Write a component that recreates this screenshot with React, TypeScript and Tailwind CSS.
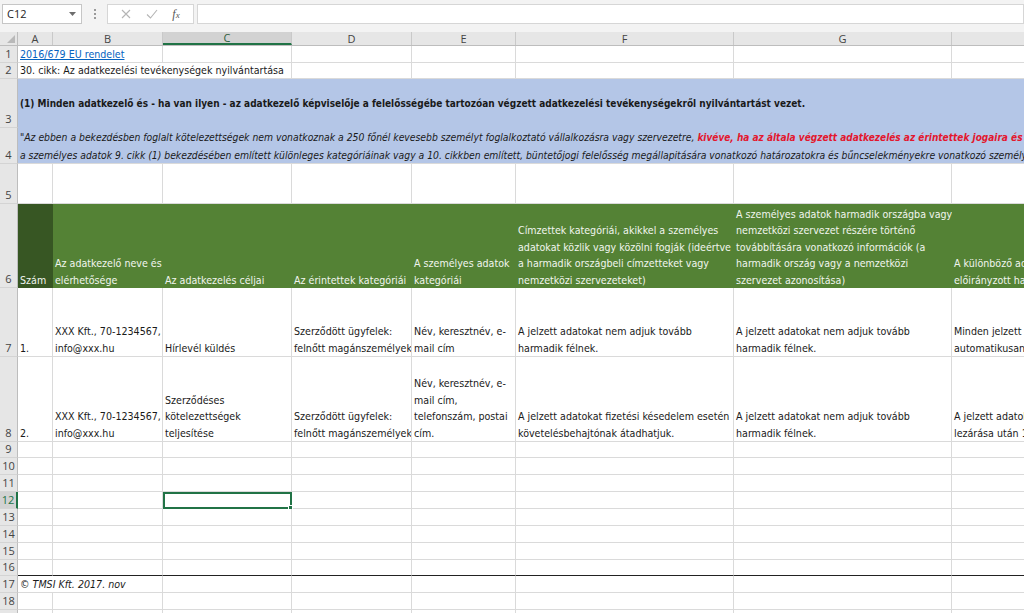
import React from 'react';

// ─── Layout constants ─────────────────────────────────────────────────────────

const COL_W = ['w-[35px]', 'w-[110px]', 'w-[129px]', 'w-[120px]', 'w-[104px]', 'w-[218px]', 'w-[218px]', 'w-[218px]'];
const COL_LABELS = ['A', 'B', 'C', 'D', 'E', 'F', 'G', 'H'];
const CELL_FONT = "font-['DejaVu_Sans_Condensed','DejaVu_Sans',sans-serif] text-[10.6px] leading-[16.5px]";
const UI_FONT = "font-['Open_Sans','Noto_Sans',sans-serif]";

type Lines = string[];

// ─── Pieces ───────────────────────────────────────────────────────────────────

const Cell: React.FC<{ w: string; lines?: Lines; className?: string; children?: React.ReactNode }> = ({
  w,
  lines = [],
  className = 'border-r border-b border-[#dadada]',
  children,
}) => (
  <div className={`${w} shrink-0 h-full flex flex-col justify-end pl-[2px] overflow-hidden whitespace-nowrap ${className}`}>
    {children ?? lines.map((l, i) => <div key={i}>{l}</div>)}
  </div>
);

const Row: React.FC<{ n: number; h: string; selected?: boolean; children?: React.ReactNode }> = ({ n, h, selected, children }) => (
  <div className={`flex ${h}`}>
    <div
      className={`w-[18px] shrink-0 flex items-end justify-center pb-[1px] text-[11px] leading-[14px] ${UI_FONT} border-b border-[#d4d4d4] ${
        selected ? 'bg-[#d2d2d2] text-[#217346] border-r-2 border-r-[#217346]' : 'bg-[#e6e6e6] text-[#444] border-r border-r-[#bdbdbd]'
      }`}
    >
      {n}
    </div>
    <div className={`flex-1 min-w-0 flex overflow-hidden text-[#1a1a1a] ${CELL_FONT}`}>{children}</div>
  </div>
);

// plain empty grid row
const EmptyCells: React.FC<{ bottom?: string }> = ({ bottom = 'border-b-[#dadada]' }) => (
  <>
    {COL_W.map((w, i) => (
      <Cell key={i} w={w} className={`border-r border-r-[#dadada] border-b ${bottom}`} />
    ))}
  </>
);

const GREEN = 'bg-[#548235] text-[#f1f5ee]';

const HEADER: Lines[] = [
  ['Szám'],
  ['Az adatkezelő neve és', 'elérhetősége'],
  ['Az adatkezelés céljai'],
  ['Az érintettek kategóriái'],
  ['A személyes adatok', 'kategóriái'],
  ['Címzettek kategóriái, akikkel a személyes', 'adatokat közlik vagy közölni fogják (ideértve', 'a harmadik országbeli címzetteket vagy', 'nemzetközi szervezeteket)'],
  ['A személyes adatok harmadik országba vagy', 'nemzetközi szervezet részére történő', 'továbbítására vonatkozó információk (a', 'harmadik ország vagy a nemzetközi', 'szervezet azonosítása)'],
  ['A különböző adatkategóriák törlésére', 'előirányzott határidők'],
];

const ROW7: Lines[] = [
  ['1.'],
  ['XXX Kft., 70-1234567,', 'info@xxx.hu'],
  ['Hírlevél küldés'],
  ['Szerződött ügyfelek:', 'felnőtt magánszemélyek'],
  ['Név, keresztnév, e-', 'mail cím'],
  ['A jelzett adatokat nem adjuk tovább', 'harmadik félnek.'],
  ['A jelzett adatokat nem adjuk tovább', 'harmadik félnek.'],
  ['Minden jelzett adatot', 'automatikusan törlünk'],
];

const ROW8: Lines[] = [
  ['2.'],
  ['XXX Kft., 70-1234567,', 'info@xxx.hu'],
  ['Szerződéses', 'kötelezettségek', 'teljesítése'],
  ['Szerződött ügyfelek:', 'felnőtt magánszemélyek'],
  ['Név, keresztnév, e-', 'mail cím,', 'telefonszám, postai', 'cím.'],
  ['A jelzett adatokat fizetési késedelem esetén', 'követelésbehajtónak átadhatjuk.'],
  ['A jelzett adatokat nem adjuk tovább', 'harmadik félnek.'],
  ['A jelzett adatokat a szerződés', 'lezárása után 1 évig'],
];

// ─── Toolbar ──────────────────────────────────────────────────────────────────

const FormulaBar: React.FC = () => (
  <div className={`h-[32px] bg-[#f3f3f3] flex items-start pt-[4px] ${UI_FONT}`}>
    <div className="ml-[2px] w-[80px] h-[20px] bg-white border border-[#c6c6c6] flex items-center justify-between pl-[4px] pr-[5px]">
      <span className="text-[11px] text-[#222]">C12</span>
      <svg width="7" height="4" viewBox="0 0 7 4">
        <path d="M0 0h7L3.5 4z" fill="#6d6d6d" />
      </svg>
    </div>
    <div className="w-[25px] h-[20px] flex flex-col items-center justify-center gap-[2px]">
      <span className="w-[2px] h-[2px] bg-[#9a9a9a]" />
      <span className="w-[2px] h-[2px] bg-[#9a9a9a]" />
      <span className="w-[2px] h-[2px] bg-[#9a9a9a]" />
    </div>
    <div className="w-[87px] h-[20px] bg-white border border-[#d6d6d6] flex items-center justify-around px-[6px]">
      <svg width="10" height="10" viewBox="0 0 10 10">
        <path d="M1 1l8 8M9 1l-8 8" stroke="#b5b5b5" strokeWidth="1.1" />
      </svg>
      <svg width="12" height="10" viewBox="0 0 12 10">
        <path d="M1 5.5l3.5 3.5L11 1" stroke="#b5b5b5" strokeWidth="1.1" fill="none" />
      </svg>
      <span className="font-['Liberation_Serif',serif] italic text-[12px] text-[#555] leading-none">
        f<span className="text-[9px]">x</span>
      </span>
    </div>
    <div className="ml-[3px] flex-1 h-[20px] bg-white border border-[#d6d6d6]" />
  </div>
);

const ColumnHeaders: React.FC = () => (
  <div className={`flex h-[14px] bg-[#e6e6e6] border-b border-[#bdbdbd] ${UI_FONT}`}>
    <div className="w-[18px] shrink-0 flex items-end justify-end p-[2px] border-r border-[#bdbdbd]">
      <svg width="8" height="8" viewBox="0 0 8 8">
        <path d="M8 0v8H0z" fill="#b9b9b9" />
      </svg>
    </div>
    <div className="flex-1 min-w-0 flex overflow-hidden">
      {COL_LABELS.map((c, i) => (
        <div
          key={c}
          className={`${COL_W[i]} shrink-0 flex items-center justify-center text-[11px] leading-[11px] border-r border-[#c9c9c9] ${
            c === 'C' ? 'bg-[#d2d2d2] text-[#2f5e40] border-b-2 border-b-[#217346]' : 'text-[#444]'
          }`}
        >
          {c}
        </div>
      ))}
    </div>
  </div>
);

// ─── Main ─────────────────────────────────────────────────────────────────────

export default function App() {
  return (
    <div className="w-[1024px] h-[613px] overflow-hidden bg-white">
      <FormulaBar />
      <ColumnHeaders />

      <Row n={1} h="h-[17px]">
        <Cell w="w-[145px]" className="border-r border-b border-[#dadada]">
          <span className="text-[#0563c1] underline">2016/679 EU rendelet</span>
        </Cell>
        {COL_W.slice(2).map((w, i) => (
          <Cell key={i} w={w} />
        ))}
      </Row>

      <Row n={2} h="h-[16px]">
        <Cell w="w-[274px]" lines={['30. cikk: Az adatkezelési tevékenységek nyilvántartása']} />
        {COL_W.slice(3).map((w, i) => (
          <Cell key={i} w={w} />
        ))}
      </Row>

      <Row n={3} h="h-[49px]">
        <div className="flex-1 h-full bg-[#b4c6e7] flex items-center px-[2px] pt-[2px] whitespace-nowrap font-bold text-[10px]">
          (1) Minden adatkezelő és - ha van ilyen - az adatkezelő képviselője a felelősségébe tartozóan végzett adatkezelési tevékenységekről nyilvántartást vezet.
        </div>
      </Row>

      <Row n={4} h="h-[36px]">
        <div className="flex-1 h-full bg-[#b4c6e7] flex flex-col justify-end px-[2px] whitespace-nowrap italic text-[10.3px] border-b border-[#dadada]">
          <div>
            "Az ebben a bekezdésben foglalt kötelezettségek nem vonatkoznak a 250 főnél kevesebb személyt foglalkoztató vállalkozásra vagy szervezetre,{' '}
            <span className="font-bold text-[#e3172e] text-[10px]">
              kivéve, ha az általa végzett adatkezelés az érintettek jogaira és szabadságaira nézve valószínűsíthetően kockázattal jár,
            </span>
          </div>
          <div>
            a személyes adatok 9. cikk (1) bekezdésében említett különleges kategóriáinak vagy a 10. cikkben említett, büntetőjogi felelősség megállapitására vonatkozó határozatokra és bűncselekményekre vonatkozó személyes adatok kezelésére."
          </div>
        </div>
      </Row>

      <Row n={5} h="h-[40px]">
        <EmptyCells />
      </Row>

      <Row n={6} h="h-[84px]">
        {HEADER.map((lines, i) => (
          <Cell key={i} w={COL_W[i]} lines={lines} className={i === 0 ? 'bg-[#375623] text-[#f1f5ee]' : GREEN} />
        ))}
      </Row>

      <Row n={7} h="h-[69px]">
        {ROW7.map((lines, i) => (
          <Cell key={i} w={COL_W[i]} lines={lines} />
        ))}
      </Row>

      <Row n={8} h="h-[85px]">
        {ROW8.map((lines, i) => (
          <Cell key={i} w={COL_W[i]} lines={lines} />
        ))}
      </Row>

      <Row n={9} h="h-[16px]">
        <EmptyCells />
      </Row>
      <Row n={10} h="h-[17px]">
        <EmptyCells />
      </Row>
      <Row n={11} h="h-[17px]">
        <EmptyCells />
      </Row>

      <Row n={12} h="h-[17px]" selected>
        {COL_W.map((w, i) =>
          i === 2 ? (
            <div key={i} className={`${w} shrink-0 h-full relative border-2 border-[#217346]`}>
              <span className="absolute -right-[3px] -bottom-[3px] w-[5px] h-[5px] bg-[#217346] border border-white" />
            </div>
          ) : (
            <Cell key={i} w={w} />
          )
        )}
      </Row>

      <Row n={13} h="h-[17px]">
        <EmptyCells />
      </Row>
      <Row n={14} h="h-[17px]">
        <EmptyCells />
      </Row>
      <Row n={15} h="h-[17px]">
        <EmptyCells />
      </Row>
      <Row n={16} h="h-[16px]">
        <EmptyCells bottom="border-b-[#222]" />
      </Row>

      <Row n={17} h="h-[17px]">
        <Cell w="w-[145px]" className="border-r border-b border-[#dadada] italic" lines={['© TMSI Kft. 2017. nov']} />
        {COL_W.slice(2).map((w, i) => (
          <Cell key={i} w={w} />
        ))}
      </Row>

      <Row n={18} h="h-[17px]">
        <EmptyCells />
      </Row>
      <Row n={19} h="h-[17px]">
        <EmptyCells />
      </Row>
    </div>
  );
}
